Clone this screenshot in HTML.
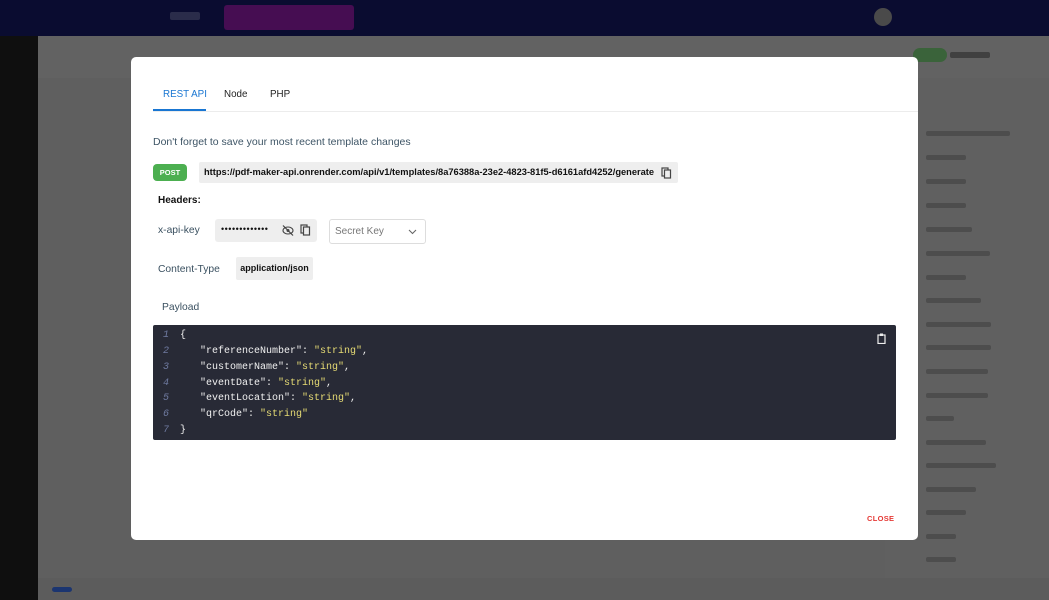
<!DOCTYPE html>
<html><head><meta charset="utf-8"><style>
*{box-sizing:border-box;margin:0;padding:0}
body{width:1049px;height:600px;overflow:hidden;background:#5f5f5f;font-family:"Liberation Sans",sans-serif;position:relative}
.top{position:absolute;left:0;top:0;width:1049px;height:36px;background:#0a0c30}
.side{position:absolute;left:0;top:36px;width:38px;height:564px;background:#0f0f0f}
.sub{position:absolute;left:38px;top:36px;width:1011px;height:42px;background:#626262}
.rp{position:absolute;left:885px;top:78px;width:164px;height:500px;background:#606060}
.bot{position:absolute;left:38px;top:578px;width:1011px;height:22px;background:#5c5c5c}
.modal{position:absolute;left:131px;top:57px;width:787px;height:483px;background:#fff;border-radius:5px}
.tabs{position:absolute;left:22px;top:0;right:0;height:55px;border-bottom:1px solid #ececec}
.tab{position:absolute;top:32px;font-size:9.8px;color:#222}
.mono{font-family:"Liberation Mono",monospace}
.abs{position:absolute}
.code{position:absolute;left:22px;top:268px;width:743px;height:115px;background:#282a36;border-radius:2px}
.ln{position:absolute;left:10px;color:#6f7aa0;font-style:italic;font-size:10px}
.cl{position:absolute;left:27px;color:#f0f0f0;font-size:10px;white-space:pre}
.in{padding-left:20px}
.s{color:#e6db74}
.item{position:absolute;left:926px;height:5px;background:#4d4d4d;border-radius:2px}
.lbl{font-size:10.3px;color:#3a5060}
</style></head><body>
<div class="top">
 <div class="abs" style="left:170px;top:12px;width:30px;height:8px;background:#2a2c4a;border-radius:2px"></div>
 <div class="abs" style="left:224px;top:5px;width:130px;height:25px;background:#460d52;border-radius:3px"></div>
 <div class="abs" style="left:874px;top:8px;width:18px;height:18px;background:#4a4a4a;border-radius:50%"></div>
</div>
<div class="side"></div>
<div class="sub">
 <div class="abs" style="left:875px;top:12px;width:34px;height:14px;background:#3a633a;border-radius:7px"></div>
 <div class="abs" style="left:912px;top:16px;width:40px;height:6px;background:#404040;border-radius:2px"></div>
</div>
<div class="rp"></div>
<div class="bot"><div class="abs" style="left:14px;top:9px;width:20px;height:5px;background:#1b3570;border-radius:3px"></div></div>
<div class="item" style="top:131px;width:84px"></div>
<div class="item" style="top:155px;width:40px"></div>
<div class="item" style="top:179px;width:40px"></div>
<div class="item" style="top:203px;width:40px"></div>
<div class="item" style="top:227px;width:46px"></div>
<div class="item" style="top:251px;width:64px"></div>
<div class="item" style="top:275px;width:40px"></div>
<div class="item" style="top:298px;width:55px"></div>
<div class="item" style="top:322px;width:65px"></div>
<div class="item" style="top:345px;width:65px"></div>
<div class="item" style="top:369px;width:62px"></div>
<div class="item" style="top:393px;width:62px"></div>
<div class="item" style="top:416px;width:28px"></div>
<div class="item" style="top:440px;width:60px"></div>
<div class="item" style="top:463px;width:70px"></div>
<div class="item" style="top:487px;width:50px"></div>
<div class="item" style="top:510px;width:40px"></div>
<div class="item" style="top:534px;width:30px"></div>
<div class="item" style="top:557px;width:30px"></div>

<div class="modal">
 <div class="tabs">
  <div class="tab" style="left:10px;color:#1976d2">REST API</div>
  <div class="abs" style="left:0;top:52px;width:53px;height:2px;background:#1976d2"></div>
  <div class="tab" style="left:71px">Node</div>
  <div class="tab" style="left:117px">PHP</div>
 </div>
 <div class="abs" style="left:22px;top:79px;font-size:10.5px;color:#3e5566">Don't forget to save your most recent template changes</div>
 <div class="abs" style="left:22px;top:107px;width:34px;height:17px;background:#4caf50;border-radius:4px;color:#fff;font-size:7.5px;font-weight:bold;text-align:center;line-height:17px">POST</div>
 <div class="abs" style="left:68px;top:105px;width:479px;height:21px;background:#eee;border-radius:2px;font-size:9.3px;font-weight:bold;color:#111;line-height:21px;padding-left:5px;white-space:nowrap">https://pdf-maker-api.onrender.com/api/v1/templates/8a76388a-23e2-4823-81f5-d6161afd4252/generate
  <svg class="abs" style="right:6px;top:5px" width="11" height="12" viewBox="0 0 11 12"><rect x="1" y="1" width="6" height="8" fill="none" stroke="#444" stroke-width="1.2"/><rect x="3.5" y="3" width="6" height="8" fill="#eee" stroke="#444" stroke-width="1.2"/></svg></div>
 <div class="abs" style="left:27px;top:138px;font-size:10px;font-weight:bold;color:#111">Headers:</div>
 <div class="abs lbl" style="left:27px;top:168px">x-api-key</div>
 <div class="abs" style="left:84px;top:162px;width:102px;height:23px;background:#eee;border-radius:3px">
  <span class="abs" style="left:6px;top:5px;font-size:9px;color:#111;letter-spacing:0.5px">•••••••••••••</span>
  <svg class="abs" style="left:67px;top:6px" width="12" height="11" viewBox="0 0 12 11"><ellipse cx="6" cy="5.5" rx="5" ry="3.5" fill="none" stroke="#444" stroke-width="1.1"/><circle cx="6" cy="5.5" r="1.5" fill="#444"/><line x1="1" y1="0.5" x2="11" y2="10.5" stroke="#444" stroke-width="1.2"/></svg>
  <svg class="abs" style="left:85px;top:5px" width="11" height="12" viewBox="0 0 11 12"><rect x="1" y="1" width="6" height="8" fill="none" stroke="#444" stroke-width="1.2"/><rect x="3.5" y="3" width="6" height="8" fill="#eee" stroke="#444" stroke-width="1.2"/></svg>
 </div>
 <div class="abs" style="left:198px;top:162px;width:97px;height:25px;border:1px solid #ddd;border-radius:3px;font-size:10px;color:#777;line-height:23px;padding-left:5px">Secret Key
  <svg class="abs" style="right:8px;top:9px" width="9" height="6" viewBox="0 0 9 6"><path d="M1 1l3.5 3.5L8 1" fill="none" stroke="#666" stroke-width="1.1"/></svg></div>
 <div class="abs lbl" style="left:27px;top:207px">Content-Type</div>
 <div class="abs" style="left:105px;top:200px;width:77px;height:23px;background:#eee;border-radius:2px;font-size:9px;font-weight:bold;color:#111;line-height:23px;text-align:center">application/json</div>
 <div class="abs lbl" style="left:31px;top:245px">Payload</div>
 <div class="code mono">
  <div class="ln" style="top:5px">1</div><div class="cl" style="top:5px">{</div>
  <div class="ln" style="top:21px">2</div><div class="cl in" style="top:21px">"referenceNumber": <span class="s">"string"</span>,</div>
  <div class="ln" style="top:37px">3</div><div class="cl in" style="top:37px">"customerName": <span class="s">"string"</span>,</div>
  <div class="ln" style="top:53px">4</div><div class="cl in" style="top:53px">"eventDate": <span class="s">"string"</span>,</div>
  <div class="ln" style="top:68px">5</div><div class="cl in" style="top:68px">"eventLocation": <span class="s">"string"</span>,</div>
  <div class="ln" style="top:84px">6</div><div class="cl in" style="top:84px">"qrCode": <span class="s">"string"</span></div>
  <div class="ln" style="top:100px">7</div><div class="cl" style="top:100px">}</div>
  <svg class="abs" style="right:10px;top:8px" width="9" height="11" viewBox="0 0 9 11"><rect x="1" y="2" width="7" height="8.5" fill="none" stroke="#eee" stroke-width="1.2"/><rect x="3" y="0.5" width="3" height="2.5" fill="#eee"/></svg>
 </div>
 <div class="abs" style="left:736px;top:457px;font-size:7.5px;font-weight:bold;color:#e53935;letter-spacing:0.3px">CLOSE</div>
</div>
</body></html>
